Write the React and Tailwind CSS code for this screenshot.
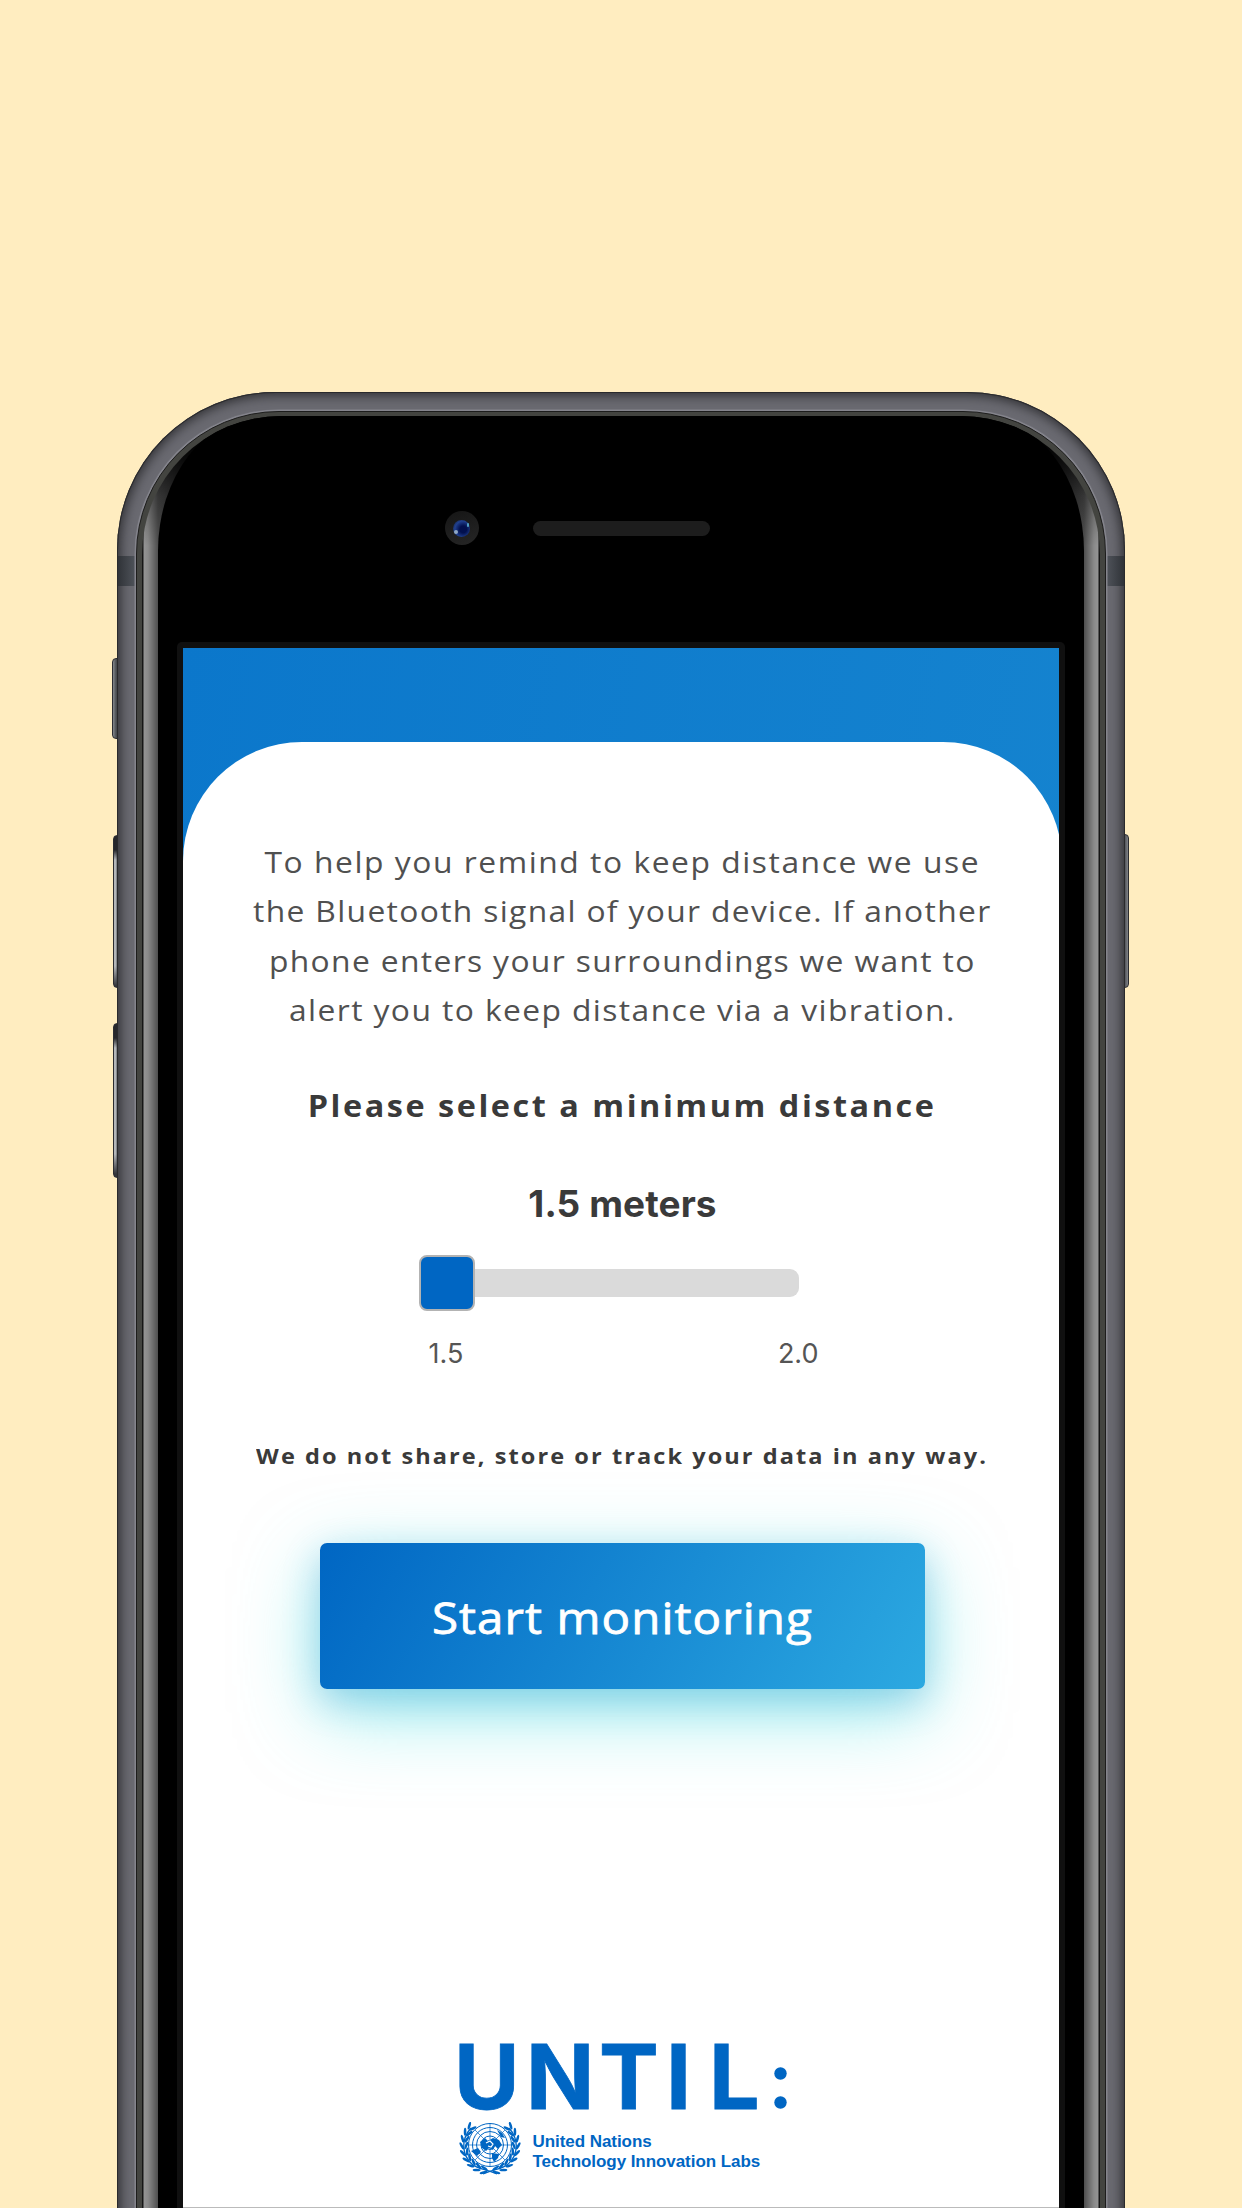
import React from "react";

const PARAGRAPH = [
  { text: "To help you remind to keep distance we use", cls: "tracking-[1.45px]" },
  { text: "the Bluetooth signal of your device. If another", cls: "tracking-[1.25px]" },
  { text: "phone enters your surroundings we want to", cls: "tracking-[1.27px]" },
  { text: "alert you to keep distance via a vibration.", cls: "tracking-[1.32px]" },
];

function Emblem() {
  const leaves = [];
  for (let i = 0; i < 9; i++) {
    const a = ((100 + i * 15) * Math.PI) / 180;
    leaves.push({ x: 26 * Math.cos(a + 0.1), y: 26 * Math.sin(a + 0.1), r: 100 + i * 15 });
  }
  return (
    <svg viewBox="-31 -23 62 53" className="h-[53px] w-[62px] shrink-0" fill="none" stroke="#0066c3">
      {[4.5, 9, 13.5, 17.5, 21.5].map((r) => (
        <circle key={r} r={r} strokeWidth="1" />
      ))}
      <path d="M-21.5 0H21.5M0 -21.5V21.5M-15 -15L15 15M-15 15L15 -15" strokeWidth="0.7" />
      <path
        d="M-10 -3L-5 -7L-2 -4L3 -7L9 -5L12 0L8 4L5 1L3 5L-1 3L-4 6L-8 3ZM-19 6L-12 3L-9 7L-13 11ZM2 8L9 9L8 13L4 17L2 13ZM7 -15L12 -12L15 -7L11 -8Z"
        fill="#0066c3"
        stroke="none"
      />
      <path d="M-4 -2L0 -4L3 -1L1 2L-2 1" stroke="#fff" strokeWidth="1.2" />
      {[1, -1].map((s) => (
        <g key={s} transform={`scale(${s} 1)`}>
          <path d="M-19 -17C-29 -6 -29 10 -17 20C-12 24 -4 24 7 29" strokeWidth="1.3" />
          {leaves.map((l) => (
            <g key={l.r} transform={`translate(${l.x} ${l.y}) rotate(${l.r + 90})`} fill="#0066c3" stroke="none">
              <ellipse cx="0" cy="-2.6" rx="4" ry="1.3" transform="rotate(-24)" />
              <ellipse cx="0" cy="2.4" rx="4" ry="1.3" transform="rotate(24)" />
            </g>
          ))}
        </g>
      ))}
    </svg>
  );
}

function Logo() {
  return (
    <div className="ml-[12px] flex w-[340px] flex-col text-[#0066c3]">
      <svg viewBox="0 0 340 72" className="h-[72px] w-[340px] overflow-visible" fill="#0066c3">
        <text
          x="-5 67 140 207 250"
          y="67.5"
          fontSize="89.5"
          fontWeight="700"
          stroke="#0066c3"
          strokeWidth="0.8"
          className="font-['Inter',sans-serif]"
        >
          UNTIL
        </text>
        <circle cx="321.5" cy="32.5" r="6.2" />
        <circle cx="321.5" cy="61.5" r="6.2" />
      </svg>
      <div className="mt-[9px] flex items-start">
        <Emblem />
        <div className="ml-[12px] mt-[10px] whitespace-nowrap font-['Liberation_Sans',sans-serif] text-[17px] font-bold leading-[20.5px] tracking-[-0.06px]">
          <p>United Nations</p>
          <p>Technology Innovation Labs</p>
        </div>
      </div>
    </div>
  );
}

function Slider() {
  return (
    <div className="mt-[26px] flex w-[380px] flex-col">
      <div className="flex h-[56px] items-center">
        <div className="h-[56px] w-[56px] shrink-0 rounded-[8px] border-2 border-[#b3b3b3] bg-[#0066c3]" />
        <div className="h-[28px] w-[324px] rounded-r-[9px] bg-[#dadada]" />
      </div>
      <div className="mt-[26px] flex h-[34px] justify-between font-['Inter',sans-serif] text-[27px] leading-[34px] text-[#555]">
        <span className="ml-[10px]">1.5</span>
        <span className="mr-[-20px]">2.0</span>
      </div>
    </div>
  );
}

function Screen() {
  return (
    <div className="h-[1560px] w-[876px] overflow-hidden bg-[linear-gradient(100deg,#0b77cb,#1786d0)] pt-[94px]">
      <div className="flex h-[1465px] w-[879px] flex-col items-center rounded-t-[119px] bg-white">
        <div className="mt-[95px] flex scale-x-[1.06] flex-col items-center whitespace-nowrap font-['Open_Sans',sans-serif] text-[30px] leading-[49.4px] text-[#505050]">
          {PARAGRAPH.map((l) => (
            <span key={l.text} className={l.cls}>
              {l.text}
            </span>
          ))}
        </div>
        <h1 className="mt-[46px] scale-x-[1.08] whitespace-nowrap font-['Open_Sans',sans-serif] text-[30px] font-bold leading-[50px] tracking-[2.35px] text-[#3a3a3a]">
          Please select a minimum distance
        </h1>
        <p className="mt-[48px] font-['Inter',sans-serif] text-[37px] font-bold leading-[50px] tracking-[0.1px] text-[#3a3a3a]">
          1.5 meters
        </p>
        <div className="w-[408px]">
          <Slider />
        </div>
        <p className="mt-[64px] scale-x-[1.07] whitespace-nowrap font-['Open_Sans',sans-serif] text-[22px] font-bold leading-[40px] tracking-[1.93px] text-[#3a3a3a]">
          We do not share, store or track your data in any way.
        </p>
        <button className="mt-[68px] h-[146px] w-[605px] shrink-0 rounded-[7px] bg-[linear-gradient(120deg,#0066c3,#2ca9e1)] pt-[3px] font-['Open_Sans',sans-serif] text-[44px] tracking-[1px] text-white shadow-[0_12px_36px_rgba(20,130,200,0.3),0_24px_80px_rgba(60,225,225,0.5)] [-webkit-text-stroke:0.8px_white]">
          <span className="inline-block scale-x-[1.08]">Start monitoring</span>
        </button>
        <div className="mt-[352px]">
          <Logo />
        </div>
      </div>
      <div className="h-px bg-[#bbb]" />
    </div>
  );
}

function Phone() {
  return (
    <div className="relative h-[1900px] w-[1008px]">
      <div className="absolute left-[-5px] top-[266px] h-[81px] w-[10px] rounded-l-[4px] border border-[#2c2d31] bg-[linear-gradient(90deg,#85898d,#4a4d51_40%,#44474b)]" />
      <div className="absolute left-[-4px] top-[443px] h-[153px] w-[10px] rounded-l-[4px] border border-[#2c2d31] bg-[linear-gradient(180deg,#26272b_14px,transparent_24px,transparent_130px,#33353a_150px),linear-gradient(90deg,#b4b7ba_20%,#66696d_40%,#4c4e52)]" />
      <div className="absolute left-[-4px] top-[631px] h-[155px] w-[10px] rounded-l-[4px] border border-[#2c2d31] bg-[linear-gradient(180deg,#26272b_14px,transparent_24px,transparent_130px,#33353a_150px),linear-gradient(90deg,#b4b7ba_20%,#66696d_40%,#4c4e52)]" />
      <div className="absolute right-[-4px] top-[442px] h-[154px] w-[10px] rounded-r-[4px] border border-[#2c2d31] bg-[linear-gradient(270deg,#808388,#44464b_50%)]" />
      <div className="relative h-full rounded-t-[158px] bg-[#6a6a71] p-[19px] shadow-[inset_0_0_0_1px_#2a2a2c,inset_0_0_12px_3px_#2c2c2f]">
        <div className="absolute left-[1px] top-[164px] h-[30px] w-[18px] bg-[linear-gradient(90deg,#303338,#50545b)]" />
        <div className="absolute right-[1px] top-[164px] h-[30px] w-[18px] bg-[linear-gradient(270deg,#303338,#50545b)]" />
        <div className="relative h-full rounded-t-[143px] border border-[#1d1d1c] bg-[#434440] px-[5px] pt-[4px] shadow-[0_0_0_1.5px_#84848c]">
          <div className="h-full overflow-hidden rounded-t-[139px] bg-[linear-gradient(180deg,#000_10px,#000000b8_45px,#00000050_80px,transparent_130px),linear-gradient(90deg,#161616_1px,#949494_2px,#8a8a8a_6px,#4e4e4e_16px,#1c1c1c_50px,#000_90px,#000_868px,#1c1c1c_908px,#4e4e4e_942px,#8a8a8a_952px,#949494_956px,#161616_957px)] px-[16px]">
            <div className="flex h-full flex-col items-center rounded-t-[105px_135px] bg-black">
              <div className="relative mt-[94px] flex h-[36px] w-full shrink-0 items-center justify-center">
                <div className="absolute left-[286.5px] top-[1px] flex h-[34px] w-[34px] items-center justify-center rounded-full bg-[linear-gradient(160deg,#151515,#262626)]">
                  <div className="relative h-[17px] w-[17px] rounded-full bg-[radial-gradient(circle_at_60%_55%,#02104e_25%,#20408f_60%,#16181f)]">
                    <div className="absolute bottom-[3px] left-[1px] h-[4px] w-[4px] rounded-full bg-[#90a8c4]" />
                    <div className="absolute right-[1px] top-[3px] h-[4px] w-[2px] rounded-full bg-[#4f9cc0]" />
                  </div>
                </div>
                <div className="h-[15px] w-[177px] rounded-full bg-[#1d1d1d]" />
              </div>
              <div className="mt-[96px] rounded-[5px] bg-[#101010] p-[6px]">
                <Screen />
              </div>
            </div>
          </div>
        </div>
      </div>
    </div>
  );
}

export default function App() {
  return (
    <div className="flex h-[2208px] w-[1242px] justify-center overflow-hidden bg-[#ffedc0] pt-[392px]">
      <Phone />
    </div>
  );
}
